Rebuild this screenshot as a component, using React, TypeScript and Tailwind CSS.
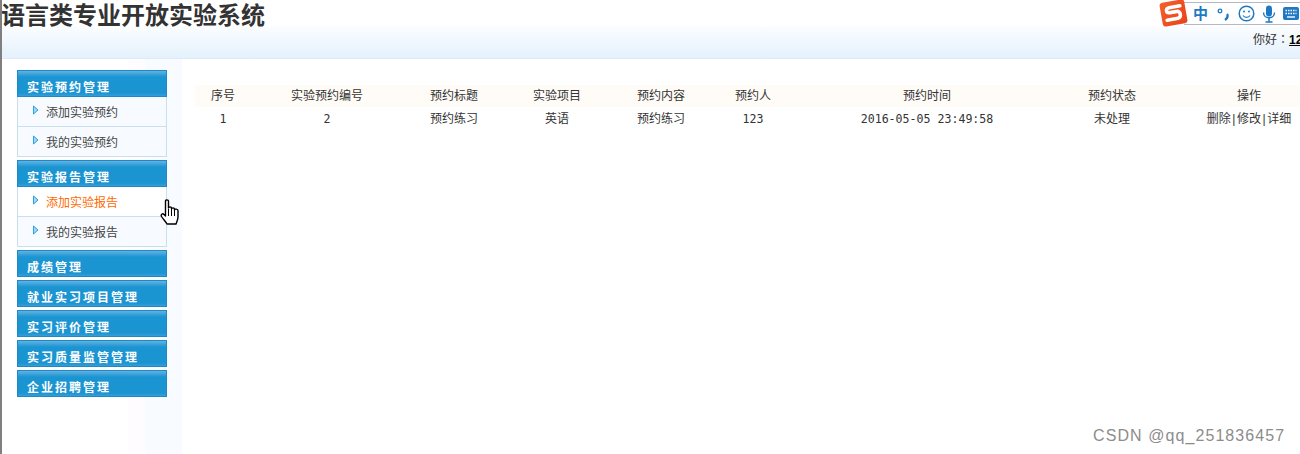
import React from "react";

const cjk = { fontFamily: '"Liberation Sans","Noto Sans CJK SC",sans-serif' };

const Bar = () => <span className="px-[1.5px]">|</span>;
const Mono = ({ children }: { children: React.ReactNode }) => (
  <span className="text-[11.6px]" style={{ fontFamily: '"DejaVu Sans Mono",monospace' }}>{children}</span>
);

const columns: { w: string; h: string; v: React.ReactNode }[] = [
  { w: "w-[56px]", h: "序号", v: <Mono>1</Mono> },
  { w: "w-[152px]", h: "实验预约编号", v: <Mono>2</Mono> },
  { w: "w-[102px]", h: "预约标题", v: "预约练习" },
  { w: "w-[104px]", h: "实验项目", v: "英语" },
  { w: "w-[104px]", h: "预约内容", v: "预约练习" },
  { w: "w-[80px]", h: "预约人", v: <Mono>123</Mono> },
  { w: "w-[268px]", h: "预约时间", v: <Mono>2016-05-05 23:49:58</Mono> },
  { w: "w-[102px]", h: "预约状态", v: "未处理" },
  { w: "w-[172px]", h: "操作", v: <>删除<Bar />修改<Bar />详细</> },
];

function MenuHead({ label }: { label: string }) {
  return (
    <div className="h-[27px] w-[150px] border border-[#2088c4] bg-[linear-gradient(#5fb4e2_0px,#3fa3da_3px,#1b94d2_6px,#1b94d2_22px,#3ea2da_26px)] pl-[9px] pt-[8px] text-[12px] font-bold leading-[18px] tracking-[2px] text-white">
      {label}
    </div>
  );
}

function MenuItem({ label, active }: { label: string; active?: boolean }) {
  return (
    <div
      className={`flex h-[30px] items-center border-b border-[#c9dfee] pl-[15px] text-[12px] ${
        active ? "bg-white text-[#ff6a00]" : "text-[#444]"
      }`}
    >
      <svg width="6" height="10" viewBox="0 0 6 10" className="mr-[7px] mb-[3px]">
        <path d="M0.5 1 L5 5 L0.5 9 Z" fill="#9fd8f6" stroke="#2f9fe2" strokeWidth="1" />
      </svg>
      <span className="pt-[3px]">{label}</span>
    </div>
  );
}

function Group({ label, items, activeIndex }: { label: string; items: string[]; activeIndex?: number }) {
  return (
    <div className="w-[150px]">
      <MenuHead label={label} />
      <div className="border-x border-[#c9dfee] bg-[#f7fbff]">
        {items.map((t, i) => (
          <MenuItem key={t} label={t} active={i === activeIndex} />
        ))}
      </div>
    </div>
  );
}

function Sogou() {
  return (
    <div className="absolute right-0 top-0 flex h-[26px] items-start">
      <div className="relative z-10 flex h-[24px] w-[25px] translate-x-[1px] translate-y-[1px] rotate-[-10deg] items-center justify-center rounded-[3px] bg-[linear-gradient(135deg,#f4602a,#e8431a)]">
        <svg width="21" height="18" viewBox="0 0 21 18">
          <path d="M18 3 H7 C3 3 3 8 7 8 H14 C18 8 18 15 14 15 H3" fill="none" stroke="#fff" strokeWidth="3.6" strokeLinecap="round" />
        </svg>
      </div>
      <div className="-ml-[1px] mt-[2px] flex h-[23px] w-[116px] items-center border-y border-[#b8b8c4] bg-white pl-[9px]">
        <span className="w-[16px] text-[15px] font-bold leading-none text-[#1d79c4]">中</span>
        <svg width="13" height="16" viewBox="0 0 13 16" className="ml-[8px]">
          <circle cx="3" cy="5" r="1.8" fill="none" stroke="#1d79c4" strokeWidth="1.3" />
          <path d="M10 8 C11 9 11 12 8 14" fill="none" stroke="#1d79c4" strokeWidth="2.4" />
        </svg>
        <svg width="17" height="17" viewBox="0 0 17 17" className="ml-[8px]">
          <circle cx="8.5" cy="8.5" r="7.3" fill="none" stroke="#1d79c4" strokeWidth="1.5" />
          <circle cx="6" cy="6.5" r="1" fill="#1d79c4" />
          <circle cx="11" cy="6.5" r="1" fill="#1d79c4" />
          <path d="M5 10.5 C6.5 13 10.5 13 12 10.5" fill="none" stroke="#1d79c4" strokeWidth="1.2" />
        </svg>
        <svg width="14" height="18" viewBox="0 0 14 18" className="ml-[7px]">
          <rect x="4" y="0.5" width="6" height="11" rx="3" fill="#1d79c4" />
          <path d="M1.5 7.5 C1.5 14.5 12.5 14.5 12.5 7.5" fill="none" stroke="#1d79c4" strokeWidth="1.4" />
          <path d="M7 13 V16.5 M3.5 17 H10.5" stroke="#1d79c4" strokeWidth="1.5" />
        </svg>
        <svg width="16" height="13" viewBox="0 0 16 13" className="ml-[7px]">
          <rect width="16" height="13" rx="2" fill="#1d79c4" />
          <path d="M2.5 3.5 H13.5 M2.5 6.5 H13.5" stroke="#fff" strokeWidth="1.4" strokeDasharray="1.5 1" />
          <path d="M4 10 H12" stroke="#fff" strokeWidth="1.4" />
        </svg>
      </div>
    </div>
  );
}

function HandCursor() {
  return (
    <svg width="20" height="26" viewBox="0 0 20 26" className="absolute left-[158px] top-[199px]">
      <path
        d="M5.5 2 C5.5 0.5 8.5 0.5 8.5 2 V9 C8.5 7.5 11.5 7.5 11.5 9 V10 C11.5 8.5 14.5 8.5 14.5 10 V11 C14.5 9.5 18 10 18 11.5 V18 C18 21 16.5 23 16 25 H7 C6 23 3 20 1.5 17.5 C0.5 15.5 2.5 14 4 15.5 L5.5 17 Z"
        fill="#fff"
        stroke="#000"
        strokeWidth="1.4"
        strokeLinejoin="round"
      />
      <path d="M8.5 10 V17 M11.5 10 V17 M14.5 11 V17" stroke="#000" strokeWidth="1" />
    </svg>
  );
}

export default function App() {
  return (
    <div className="relative h-[454px] w-[1300px] overflow-hidden border-l-2 border-[#7f7f7f] bg-white" style={cjk}>
      <div className="relative h-[26px] bg-white">
        <h1 className="-ml-[1px] whitespace-nowrap text-[24px] font-bold leading-[31px] text-[#333]">语言类专业开放实验系统</h1>
      </div>
      <div className="flex h-[33px] justify-end border-b border-[#dcebf7] bg-[linear-gradient(#fbfdff,#e4f1fc)] pt-[4px]">
        <span className="w-[47px] whitespace-nowrap text-[12px] leading-[17px] text-[#333]">
          你好<span style={{ fontFamily: '"Noto Sans CJK TC",sans-serif' }}>：</span><span className="font-bold text-black underline">12</span>
        </span>
      </div>
      <Sogou />
      <div className="flex h-[395px]">
        <aside className="flex w-[180px] flex-col gap-[3px] bg-[linear-gradient(90deg,#fff_0px,#fff_126px,#fffcff_127px,#fffcff_143px,#f8fbff_144px)] pl-[15px] pt-[11px]">
          <Group label="实验预约管理" items={["添加实验预约", "我的实验预约"]} />
          <Group label="实验报告管理" items={["添加实验报告", "我的实验报告"]} activeIndex={0} />
          <MenuHead label="成绩管理" />
          <MenuHead label="就业实习项目管理" />
          <MenuHead label="实习评价管理" />
          <MenuHead label="实习质量监管管理" />
          <MenuHead label="企业招聘管理" />
        </aside>
        <main className="min-w-0 flex-1 overflow-hidden pl-[13px] pt-[26px] text-[12px] text-[#333]">
          <div className="flex h-[22px] w-[1140px] items-center bg-[#fffcf7]">
            {columns.map((c) => (
              <div key={c.h} className={`${c.w} shrink-0 text-center`}>{c.h}</div>
            ))}
          </div>
          <div className="flex h-[22px] w-[1140px] items-center pt-[2px]">
            {columns.map((c) => (
              <div key={c.h} className={`${c.w} shrink-0 text-center`}>{c.v}</div>
            ))}
          </div>
        </main>
      </div>
      <HandCursor />
      <div className="absolute left-[1091px] top-[426px] whitespace-nowrap text-[16px] leading-[20px] tracking-[1.08px] text-[#8c8c8c]">CSDN @qq_251836457</div>
    </div>
  );
}
